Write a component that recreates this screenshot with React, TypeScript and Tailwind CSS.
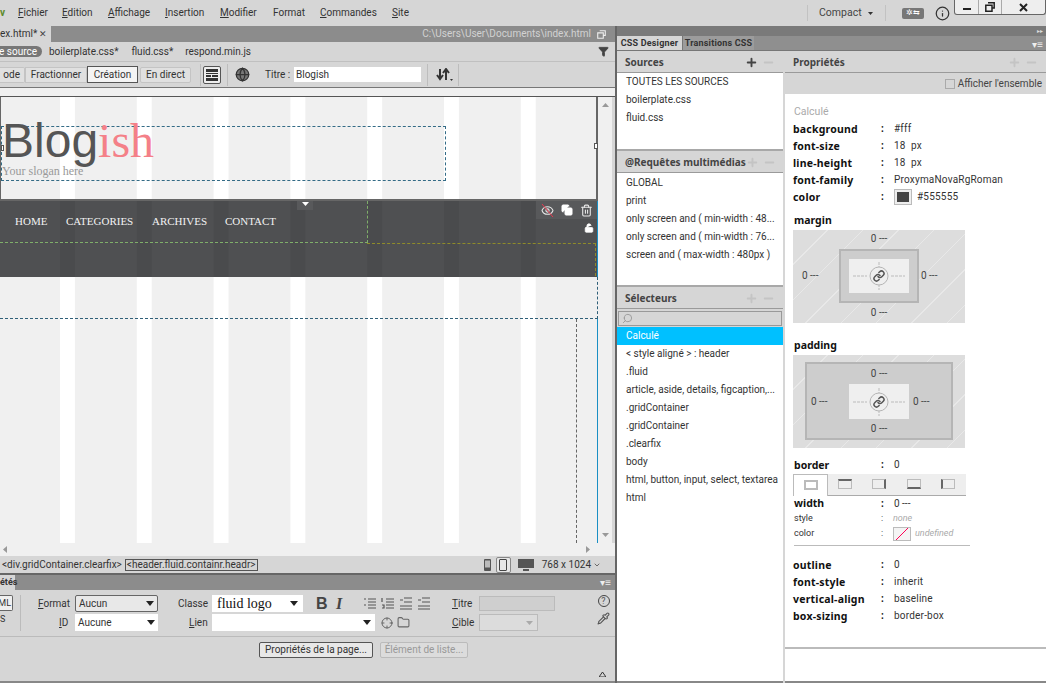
import React from "react";
import { Link as LinkIcon, Plus, Minus, Search, Info, Folder, Globe, Crosshair, LockOpen, Eye, Trash2, Copy, Filter, Pipette, ChevronDown } from "lucide-react";

const Arrow = ({ c = "" }: { c?: string }) => (
  <svg width="8" height="5" viewBox="0 0 8 5" className={c}><path d="M0 0h8L4 5z" fill="#222" /></svg>
);

const Menu = ({ u, r, w }: { u: string; r: string; w: string }) => (
  <span className={w}><span className="underline">{u}</span>{r}</span>
);

const Header = ({ title, dim = true }: { title: string; dim?: boolean }) => (
  <div className="flex h-[22px] items-center justify-between border-b border-[#9a9a9a] bg-[#d6d6d6] pl-[8px] pr-[8px] pt-px">
    <span className="whitespace-nowrap font-['Noto_Sans',sans-serif] text-[10px] font-bold text-[#444]">{title}</span>
    <span className="flex items-center gap-[4px]">
      <Plus size={13} strokeWidth={3.5} className={dim ? "text-[#c4c4c4]" : "text-[#444]"} />
      <Minus size={13} strokeWidth={3.5} className="text-[#c4c4c4]" />
    </span>
  </div>
);

const Row = ({ children, active }: { children: React.ReactNode; active?: boolean }) => (
  <div className={`flex h-[18px] items-center whitespace-nowrap pl-[9px] ${active ? "bg-[#00c0ff] text-white" : "text-[#333]"}`}>{children}</div>
);

const Prop = ({ k, children }: { k: string; children: React.ReactNode }) => (
  <div className="grid h-[17px] grid-cols-[88px_13px_1fr] items-center">
    <span className="font-['Noto_Sans',sans-serif] text-[10.5px] font-bold tracking-[0.2px] text-[#111]">{k}</span>
    <span className="font-bold text-[#111]">:</span>
    <span className="whitespace-nowrap tracking-[0.2px] text-[#333]">{children}</span>
  </div>
);

const Center = ({ w, h }: { w: string; h: string }) => (
  <div className={`flex items-center justify-center bg-[#efefef] ${w} ${h}`}>
    <svg width="60" height="34" viewBox="0 0 60 34">
      <path d="M4 17h14M42 17h14M30 3v6M30 25v6" stroke="#bbb" strokeDasharray="3 1" fill="none" />
      <circle cx="30" cy="17" r="9" fill="#efefef" stroke="#b5b5b5" />
      <LinkIcon x={24} y={11} width={12} height={12} stroke="#555" strokeWidth={3} />
    </svg>
  </div>
);

const V = ({ c = "" }: { c?: string }) => <span className={`whitespace-nowrap text-[10px] text-[#444] ${c}`}>0 ---</span>;

const BorderIcon = ({ side }: { side: string }) => (
  <span className={`box-border block h-[10px] w-[14px] border border-[#bbb] ${side}`} />
);

const Sep = () => <div className="mx-[6px] h-[22px] w-px bg-[#bdbdbd]" />;

export default function App() {
  return (
    <div className="flex h-[683px] w-[1046px] flex-col overflow-hidden bg-[#d6d6d6] font-['Roboto',sans-serif] text-[10px] leading-none text-[#333]">
      {/* menu bar */}
      <div className="flex h-[26px] shrink-0 items-center text-[#333]">
        <span className="w-[18px] font-bold text-[#5d8a2c]">v</span>
        <Menu u="F" r="ichier" w="w-[44px]" />
        <Menu u="E" r="dition" w="w-[46px]" />
        <Menu u="A" r="ffichage" w="w-[57px]" />
        <Menu u="I" r="nsertion" w="w-[55px]" />
        <Menu u="M" r="odifier" w="w-[53px]" />
        <Menu u="" r="Format" w="w-[47px]" />
        <Menu u="C" r="ommandes" w="w-[72px]" />
        <Menu u="S" r="ite" w="w-[30px]" />
        <div className="flex-1" />
        <div className="h-[16px] w-px bg-[#c2c2c2]" />
        <span className="ml-[11px] w-[49px] text-[10.5px] text-[#444]">Compact</span>
        <svg width="5" height="3" viewBox="0 0 5 3"><path d="M0 0h5L2.500 3z" fill="#333" /></svg>
        <div className="ml-[12px] h-[16px] w-px bg-[#c2c2c2]" />
        <span className="ml-[16px] flex h-[11px] w-[22px] items-center justify-center rounded-[2px] bg-[#777] text-[8px] text-white">✲⇆</span>
        <Info size={15} className="ml-[11px] text-[#333]" />
        <div className="ml-[4px] flex h-[15px] self-start rounded-b-[3px] border-x border-b border-[#666] bg-[#eee]">
          <span className="flex w-[24px] items-center justify-center border-r border-[#aaa]"><span className="mt-[3px] h-[2px] w-[8px] bg-[#222]" /></span>
          <span className="flex w-[23px] items-center justify-center border-r border-[#aaa]">
            <svg width="10" height="10" viewBox="0 0 10 10"><path d="M3 .8h6.200V6H7M.8 3.200H7v6H.8z" fill="none" stroke="#222" strokeWidth="1.500" /></svg>
          </span>
          <span className="flex w-[43px] items-center justify-center">
            <svg width="9" height="9" viewBox="0 0 9 9"><path d="M1 1l7 7M8 1L1 8" stroke="#222" strokeWidth="2" /></svg>
          </span>
        </div>
      </div>

      <div className="flex min-h-0 flex-1">
        {/* left column */}
        <div className="flex w-[615px] shrink-0 flex-col">
          {/* document tab */}
          <div className="flex h-[16px] shrink-0 items-center bg-[#8c8c8c]">
            <div className="flex h-full w-[51px] items-center justify-between bg-[#d6d6d6] pr-[4px] text-[#333]">
              <span>ex.html*</span>
              <span className="text-[9px] text-[#444]">✕</span>
            </div>
            <div className="flex-1" />
            <span className="text-[#d2d2d2]">C:\Users\User\Documents\index.html</span>
            <svg width="9" height="9" viewBox="0 0 10 10" className="ml-[6px] mr-[9px]"><path d="M3 .8h6.200V6H7M.8 3.200H7v6H.8z" fill="none" stroke="#eee" strokeWidth="1.200" /></svg>
          </div>
          {/* related files */}
          <div className="flex h-[20px] shrink-0 items-center border-b border-[#c0c0c0] text-[#333]">
            <span className="flex h-[11px] w-[42px] items-center justify-end whitespace-nowrap rounded-r-full bg-[#777] pr-[5px] text-white">le source</span>
            <span className="ml-[7px]">boilerplate.css*</span>
            <span className="ml-[13px]">fluid.css*</span>
            <span className="ml-[12px]">respond.min.js</span>
            <div className="flex-1" />
            <Filter size={11} fill="#444" className="mr-[6px] text-[#444]" />
          </div>
          {/* toolbar */}
          <div className="flex h-[26px] shrink-0 items-center border-b border-[#777] text-[#333]">
            <span className="flex h-[16px] w-[25px] items-center justify-end rounded-r-[2px] border border-l-0 border-[#c4c4c4] bg-[#e0e0e0] pr-[4px]">ode</span>
            <span className="flex h-[16px] w-[62px] items-center justify-center border border-[#c4c4c4] bg-[#e0e0e0]">Fractionner</span>
            <span className="flex h-[17px] w-[51px] items-center justify-center border border-[#555] bg-[#f4f4f4]">Création</span>
            <span className="ml-[2px] flex h-[16px] w-[51px] items-center justify-center rounded-[2px] border border-[#c4c4c4] bg-[#e0e0e0]">En direct</span>
            <div className="ml-[9px] h-[22px] w-px bg-[#bdbdbd]" />
            <span className="ml-[2px] flex h-[18px] w-[18px] items-center justify-center rounded-[2px] border border-[#555] bg-[#eee]">
              <svg width="12" height="12" viewBox="0 0 12 12"><path d="M0 0h12v3H0zM0 4h12v1H0zM0 6h5v2H0zM6 6h6v2H6zM0 9h12v3H0z" fill="#333" /></svg>
            </span>
            <Sep />
            <Globe size={15} className="ml-[1px] text-[#333]" fill="#777" />
            <span className="ml-[15px] w-[29px] whitespace-nowrap">Titre :</span>
            <span className="flex h-[15px] w-[127px] items-center bg-white pl-[2px]">Blogish</span>
            <Sep />
            <svg width="18" height="13" viewBox="0 0 18 13" className="ml-[2px]">
              <path d="M4 1v9M1 7l3 4 3-4M10 12V3M7 5l3-4 3 4" fill="none" stroke="#333" strokeWidth="2" />
              <path d="M14 11h3l-1.500 2z" fill="#333" />
            </svg>
            <span className="ml-[4px] h-[22px] w-px bg-[#bdbdbd]" />
          </div>
          <div className="h-[8px] shrink-0 bg-[#f0f0f0]" />
          {/* canvas */}
          <div className="flex h-[447px] shrink-0 border-t border-[#555]">
            <div className="flex h-[446px] w-[598px] shrink-0 flex-col bg-[linear-gradient(90deg,#fff_15px,#f0f0f0_15px)] bg-[size:76.8px_100%] bg-[position:60px_0]">
              <div className="relative h-[104px] shrink-0 border-b-2 border-l border-r-2 border-[#666] pt-[29px]">
                <div className="h-[55px] w-[445px] border border-dashed border-[#336b86]">
                  <div className="flex h-[38px] items-end whitespace-nowrap leading-none">
                    <span className="font-['Liberation_Sans',sans-serif] text-[48px] text-[#555]">Blog</span>
                    <span className="font-['Liberation_Serif',serif] text-[48px] text-[#f48088]">ish</span>
                  </div>
                  <div className="font-['Liberation_Serif',serif] text-[12px] text-[#999]">Your slogan here</div>
                </div>
                <span className="absolute left-0 top-[48px] h-[6px] w-[3px] border border-[#555] bg-white" />
                <span className="absolute right-[-2px] top-[46px] h-[6px] w-[4px] border border-[#555] bg-white" />
              </div>
              <div className="relative h-[76px] shrink-0 border-r border-[#1a8fc4] bg-[#4f5052] bg-[linear-gradient(90deg,#4a4b4d_15px,#4f5052_15px)] bg-[size:76.8px_100%] bg-[position:60px_0]">
                <div className="flex h-[42px] w-[368px] items-center border-b border-r border-dashed border-[#7fae6a] font-['Liberation_Serif',serif] text-[11px] text-[#f2f2f2]">
                  <span className="ml-[15px] w-[31px]">HOME</span>
                  <span className="ml-[20px] w-[66px] whitespace-nowrap">CATEGORIES</span>
                  <span className="ml-[20px] w-[54px]">ARCHIVES</span>
                  <span className="ml-[19px]">CONTACT</span>
                </div>
                <div className="ml-[367px] mr-[1px] h-[33px] border-r border-t border-dashed border-[#8f8c2a]" />
                <span className="absolute left-[297px] top-0 flex h-[9px] w-[16px] items-start justify-center bg-[#58595b] pt-[1px]">
                  <svg width="7" height="4" viewBox="0 0 7 4"><path d="M0 0h7L3.500 4z" fill="#fff" /></svg>
                </span>
                <div className="absolute right-0 top-0 flex h-[18px] w-[61px] items-center justify-end gap-[7px] bg-[#58595b] pr-[4px]">
                  <span className="relative block h-[13px] w-[13px]">
                    <Eye size={13} className="text-[#e8e8e8]" />
                    <svg width="13" height="13" viewBox="0 0 13 13" className="absolute left-0 top-0"><path d="M1 0l11 13" stroke="#e8384f" /></svg>
                  </span>
                  <Copy size={12} className="text-white" fill="#fff" />
                  <Trash2 size={13} className="text-[#e8e8e8]" />
                </div>
                <LockOpen size={10} className="absolute right-[3px] top-[22px] text-white" fill="#fff" />
              </div>
              <div className="h-[42px] shrink-0 border-b border-r border-dashed border-[#2f5f78]" />
              <div className="flex min-h-0 flex-1 justify-end border-r border-[#1a8fc4]">
                <div className="mr-[20px] h-full w-0 border-r border-dashed border-[#666]" />
              </div>
            </div>
            {/* vertical scrollbar */}
            <div className="flex h-[446px] w-[14px] flex-col items-center justify-between bg-[#f0f0f0] py-[6px]">
              <svg width="7" height="4" viewBox="0 0 7 4"><path d="M3.500 0L7 4H0z" fill="#999" /></svg>
              <svg width="7" height="4" viewBox="0 0 7 4"><path d="M0 0h7L3.500 4z" fill="#999" /></svg>
            </div>
            <div className="w-[3px] bg-[#d6d6d6]" />
          </div>
          {/* h scroll */}
          <div className="flex h-[13px] shrink-0 items-center justify-between bg-[#f0f0f0] pl-[3px] pr-[25px]">
            <svg width="4" height="7" viewBox="0 0 4 7"><path d="M4 0v7L0 3.500z" fill="#999" /></svg>
            <svg width="4" height="7" viewBox="0 0 4 7"><path d="M0 0v7l4-3.500z" fill="#999" /></svg>
          </div>
          {/* tag bar */}
          <div className="flex h-[19px] shrink-0 items-center border-b-2 border-[#666] text-[#333]">
            <span className="ml-[2px]">&lt;div.gridContainer.clearfix&gt;</span>
            <span className="ml-[3px] border border-[#555] px-px leading-[10px]">&lt;header.fluid.containr.headr&gt;</span>
            <div className="flex-1" />
            <svg width="7" height="12" viewBox="0 0 7 12"><rect width="7" height="12" rx="1" fill="#555" /><rect x="1" y="1.500" width="5" height="7" fill="#bbb" /></svg>
            <span className="ml-[5px] flex h-[16px] w-[15px] items-center justify-center rounded-[2px] border border-[#888] bg-[#e6e6e6]"><span className="h-[12px] w-[8px] rounded-[1px] border border-[#444]" /></span>
            <svg width="16" height="12" viewBox="0 0 16 12" className="ml-[7px]"><path d="M0 0h16v9H0z" fill="#555" /><path d="M5 10h6v2H5z" fill="#555" /></svg>
            <span className="ml-[8px] whitespace-nowrap text-[#333]">768 x 1024</span>
            <ChevronDown size={8} className="ml-[2px] mr-[14px] text-[#333]" />
          </div>
          {/* properties header */}
          <div className="flex h-[15px] shrink-0 items-center justify-between bg-[#8c8c8c]">
            <span className="flex h-full w-[15px] items-center bg-[#d6d6d6] text-[9px] font-bold text-[#333]">étés</span>
            <span className="mr-[4px] text-[10px] text-[#eee]">▾≡</span>
          </div>
          {/* properties panel */}
          <div className="flex min-h-0 flex-1 flex-col">
            <div className="flex border-b border-[#bbb] pb-[5px] pt-[5px]">
              <div className="flex w-[21px] flex-col border-r border-[#bbb]">
                <span className="flex h-[16px] w-[13px] items-center justify-end rounded-r-[2px] border border-l-0 border-[#666] bg-[#f0f0f0] pr-px text-[9px]">ML</span>
                <span className="mt-[4px] text-[9px]">S</span>
              </div>
              <div className="flex flex-col gap-[2px]">
                <div className="flex h-[17px] items-center">
                  <span className="ml-[17px] w-[30px] whitespace-nowrap"><span className="underline">F</span>ormat</span>
                  <span className="ml-[7px] flex h-[17px] w-[83px] items-center justify-between rounded-[2px] border border-[#666] bg-[#e8e8e8] px-[3px]">Aucun<Arrow /></span>
                  <span className="ml-[20px] w-[27px]">Classe</span>
                  <span className="ml-[7px] flex h-[17px] w-[91px] items-center justify-between bg-white px-[5px] font-['Liberation_Serif',serif] text-[14px] text-[#111]">fluid logo<Arrow /></span>
                  <span className="ml-[13px] w-[20px] font-['Liberation_Sans',sans-serif] text-[16px] font-bold text-[#444]">B</span>
                  <span className="w-[27px] font-['Liberation_Serif',serif] text-[16px] font-bold italic text-[#444]">I</span>
                  <span className="flex w-[89px] gap-[4px]">
                    {["M1 2h2M5 2h8M5 5h8M5 8h8M5 11h8M1 8h2", "M1 1v4M5 2h8M5 5h8M5 8h8M5 11h8M1 8h2v3H1", "M5 1h8M5 5h8M1 9h12M1 12h12M4 3H1", "M5 1h8M5 5h8M1 9h12M1 12h12M1 3h3"].map((d, i) => (
                      <svg key={i} width="14" height="13" viewBox="0 0 14 13"><path d={d} stroke="#555" strokeWidth="1.200" fill="none" /></svg>
                    ))}
                  </span>
                  <span className="w-[27px]"><span className="underline">T</span>itre</span>
                  <span className="h-[15px] w-[76px] border border-[#bbb] bg-[#cfcfcf]" />
                </div>
                <div className="flex h-[17px] items-center">
                  <span className="ml-[38px] w-[9px]"><span className="underline">I</span>D</span>
                  <span className="ml-[7px] flex h-[17px] w-[83px] items-center justify-between bg-white px-[3px]">Aucune<Arrow /></span>
                  <span className="ml-[31px] w-[16px]"><span className="underline">L</span>ien</span>
                  <span className="ml-[7px] flex h-[17px] w-[163px] items-center justify-end bg-white pr-[4px]"><Arrow /></span>
                  <Crosshair size={12} className="ml-[6px] text-[#666]" />
                  <Folder size={13} className="ml-[4px] text-[#666]" />
                  <span className="ml-[42px] w-[27px]"><span className="underline">C</span>ible</span>
                  <span className="flex h-[17px] w-[59px] items-center justify-end border border-[#bbb] bg-[#dcdcdc] pr-[4px]">
                    <svg width="7" height="4" viewBox="0 0 7 4"><path d="M0 0h7L3.500 4z" fill="#aaa" /></svg>
                  </span>
                </div>
              </div>
              <div className="ml-[42px] flex flex-col items-center gap-[5px] text-[#555]">
                <span className="flex h-[12px] w-[12px] items-center justify-center rounded-full border border-[#444] text-[9px]">?</span>
                <Pipette size={13} />
              </div>
            </div>
            <div className="flex gap-[7px] pl-[259px] pt-[5px]">
              <span className="flex h-[16px] w-[114px] items-center justify-center whitespace-nowrap rounded-[2px] border border-[#555] bg-[#e8e8e8]">Propriétés de la page...</span>
              <span className="flex h-[16px] w-[88px] items-center justify-center whitespace-nowrap rounded-[2px] border border-[#bbb] bg-[#dcdcdc] text-[#999]">Élément de liste...</span>
            </div>
            <div className="mt-auto flex justify-end pb-[4px] pr-[9px]">
              <svg width="7" height="5" viewBox="0 0 7 5"><path d="M3.500 0L7 5H0z" fill="none" stroke="#333" /></svg>
            </div>
            <div className="h-[2px] bg-[#888]" />
          </div>
        </div>

        {/* right column */}
        <div className="flex w-[431px] shrink-0 flex-col border-l-2 border-[#666]">
          <div className="flex h-[10px] shrink-0 items-center justify-end bg-[#7a7a7a] pr-[3px] text-[6px] text-[#ddd]">▸▸</div>
          <div className="flex h-[15px] shrink-0 items-end justify-between border-b border-[#777] bg-[#8f8f8f]">
            <div className="flex h-full">
              <span className="flex w-[65px] items-center justify-center whitespace-nowrap bg-[#d6d6d6] text-[9px] font-bold tracking-[0.2px] text-[#333]">CSS Designer</span>
              <span className="flex w-[72px] items-center justify-center whitespace-nowrap border-l border-[#777] bg-[#9c9c9c] text-[9px] font-bold tracking-[0.2px] text-[#333]">Transitions CSS</span>
            </div>
            <span className="mr-[3px] text-[10px] text-[#eee]">▾≡</span>
          </div>
          <div className="flex min-h-0 flex-1">
            {/* left sub panel */}
            <div className="flex w-[166px] shrink-0 flex-col bg-white">
              <Header title="Sources" dim={false} />
              <div className="h-[78px] border-b-2 border-[#a8a8a8]">
                <Row>TOUTES LES SOURCES</Row>
                <Row>boilerplate.css</Row>
                <Row>fluid.css</Row>
              </div>
              <Header title="@Requêtes multimédias" />
              <div className="h-[114px] border-b-2 border-[#a8a8a8] pt-px">
                <Row>GLOBAL</Row>
                <Row>print</Row>
                <Row>only screen and ( min-width : 48...</Row>
                <Row>only screen and ( min-width : 76...</Row>
                <Row>screen and ( max-width : 480px )</Row>
              </div>
              <Header title="Sélecteurs" />
              <div className="flex h-[18px] items-center bg-[#d6d6d6] px-px">
                <span className="flex h-[15px] w-full items-center border border-[#999] bg-[#d6d6d6] pl-[3px]"><Search size={11} className="-scale-x-100 text-[#999]" /></span>
              </div>
              <Row active>Calculé</Row>
              <Row>&lt; style aligné &gt; : header</Row>
              <Row>.fluid</Row>
              <Row>article, aside, details, figcaption,...</Row>
              <Row>.gridContainer</Row>
              <Row>.gridContainer</Row>
              <Row>.clearfix</Row>
              <Row>body</Row>
              <Row>html, button, input, select, textarea</Row>
              <Row>html</Row>
              <div className="flex-1" />
              <div className="h-[2px] bg-[#888]" />
            </div>
            <div className="w-[2px] shrink-0 bg-[#d6d6d6]" />
            {/* right sub panel */}
            <div className="flex min-w-0 flex-1 flex-col bg-white">
              <Header title="Propriétés" />
              <div className="flex h-[21px] shrink-0 items-center justify-end gap-[3px] bg-[#d6d6d6] pr-[4px] text-[#444]">
                <span className="h-[10px] w-[10px] border border-[#aaa] bg-[#d6d6d6]" />
                Afficher l'ensemble
              </div>
              <div className="flex h-[555px] shrink-0 flex-col border-b-2 border-[#bbb] pl-[8px] pr-[70px] pt-[13px]">
                <div className="mb-[3px] ml-px text-[10.5px] text-[#aaa]">Calculé</div>
                <Prop k="background">#fff</Prop>
                <Prop k="font-size">18&nbsp; px</Prop>
                <Prop k="line-height">18&nbsp; px</Prop>
                <Prop k="font-family">ProxymaNovaRgRoman</Prop>
                <Prop k="color">
                  <span className="flex items-center gap-[5px]">
                    <span className="flex h-[16px] w-[18px] items-center justify-center border border-[#bbb] bg-[#eee]"><span className="h-[10px] w-[12px] bg-[#444]" /></span>
                    #555555
                  </span>
                </Prop>
                <div className="ml-px mt-[9px] h-[15px] font-['Noto_Sans',sans-serif] text-[10.5px] font-bold text-[#111]">margin</div>
                <div className="grid h-[93px] w-[172px] shrink-0 grid-cols-[46px_80px_46px] grid-rows-[19px_54px_20px] items-center justify-items-center bg-[#dddddd] bg-[repeating-linear-gradient(135deg,#ddd_0,#ddd_24px,#e8e8e8_24px,#e8e8e8_25px)]">
                  <span />
                  <V />
                  <span />
                  <V c="justify-self-start ml-[9px]" />
                  <div className="flex h-full w-full items-center justify-center border-2 border-[#b5b5b5] bg-[#cdcdcd]"><Center w="w-[60px]" h="h-[34px]" /></div>
                  <V c="justify-self-start ml-[2px]" />
                  <span />
                  <V />
                  <span />
                </div>
                <div className="ml-px mt-[17px] h-[15px] font-['Noto_Sans',sans-serif] text-[10.5px] font-bold text-[#111]">padding</div>
                <div className="flex h-[93px] w-[172px] shrink-0 items-center justify-center bg-[#dddddd] bg-[repeating-linear-gradient(135deg,#ddd_0,#ddd_24px,#e8e8e8_24px,#e8e8e8_25px)]">
                  <div className="grid h-[78px] w-[148px] grid-cols-[42px_60px_42px] grid-rows-[20px_35px_19px] items-center justify-items-center border-2 border-[#b5b5b5] bg-[#cdcdcd]">
                    <span />
                    <V />
                    <span />
                    <V c="justify-self-start ml-[4px]" />
                    <Center w="w-[60px]" h="h-[35px]" />
                    <V c="justify-self-start ml-[4px]" />
                    <span />
                    <V />
                    <span />
                  </div>
                </div>
                <div className="mt-[9px] flex h-[17px] shrink-0 items-center">
                  <span className="ml-px w-[87px] font-['Noto_Sans',sans-serif] text-[10.5px] font-bold text-[#111]">border</span>
                  <span className="w-[13px] font-bold text-[#111]">:</span>
                  <span>0</span>
                </div>
                <div className="flex h-[22px] w-[173px] shrink-0 items-center border-b border-[#aaa] bg-[#eee]">
                  <span className="-mb-px flex h-[22px] w-[35px] items-center justify-center border border-b-0 border-[#bbb] bg-white"><BorderIcon side="border-2 border-[#555]" /></span>
                  <span className="flex w-[34px] justify-center"><BorderIcon side="border-t-2 border-t-[#666]" /></span>
                  <span className="flex w-[34px] justify-center"><BorderIcon side="border-r-2 border-r-[#666]" /></span>
                  <span className="flex w-[35px] justify-center"><BorderIcon side="border-b-2 border-b-[#666]" /></span>
                  <span className="flex w-[34px] justify-center"><BorderIcon side="border-l-2 border-l-[#666]" /></span>
                </div>
                <div className="mt-[1px] flex h-[14px] shrink-0 items-center">
                  <span className="ml-px w-[87px] font-['Noto_Sans',sans-serif] text-[10.5px] font-bold text-[#111]">width</span>
                  <span className="w-[13px] font-bold text-[#111]">:</span>
                  <span>0 ---</span>
                </div>
                <div className="flex h-[15px] shrink-0 items-center text-[9px]">
                  <span className="ml-px w-[87px]">style</span>
                  <span className="w-[12px]">:</span>
                  <span className="italic text-[#aaa]">none</span>
                </div>
                <div className="flex h-[16px] shrink-0 items-center text-[9px]">
                  <span className="ml-px w-[87px]">color</span>
                  <span className="w-[12px]">:</span>
                  <span className="flex items-center gap-[4px] italic text-[#aaa]">
                    <span className="h-[14px] w-[18px] border border-[#bbb] bg-[linear-gradient(135deg,#f4f4f4_47%,#f05_47%,#f05_53%,#f4f4f4_53%)]" />
                    undefined
                  </span>
                </div>
                <div className="ml-px mt-[3px] h-px w-[176px] shrink-0 bg-[#bbb]" />
                <div className="mt-[11px]" />
                <Prop k="outline">0</Prop>
                <Prop k="font-style">inherit</Prop>
                <Prop k="vertical-align">baseline</Prop>
                <Prop k="box-sizing">border-box</Prop>
              </div>
              <div className="flex-1" />
              <div className="h-[2px] bg-[#888]" />
            </div>
          </div>
        </div>
      </div>
    </div>
  );
}
